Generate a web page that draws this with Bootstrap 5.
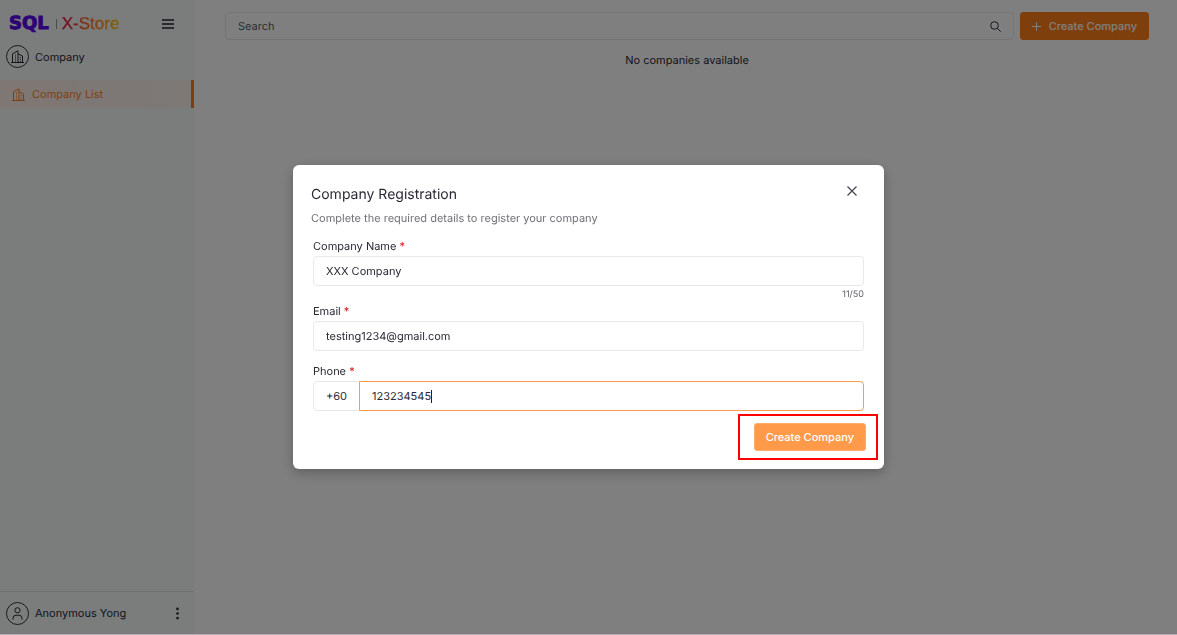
<!DOCTYPE html>
<html lang="en">
<head>
<meta charset="utf-8">
<meta name="viewport" content="width=device-width, initial-scale=1">
<title>SQL X-Store</title>
<link rel="stylesheet" href="https://cdn.jsdelivr.net/npm/bootstrap@5.3.0/dist/css/bootstrap.min.css">
<style>
:root{--ink:#2a2a36;--line:#e9e9eb;--brand:#ff7f1a}
body{font-family:Inter,sans-serif;font-size:11px;line-height:16px;color:var(--ink);background:#fff;text-rendering:geometricPrecision}
input,button{text-rendering:inherit}
svg{display:block;fill:none;stroke:currentColor}
.app{border-bottom:1px solid #b3adb1}
.side{width:194px;background:#f5fbf9}
.side-head{height:45px;padding:3px 20px 0 9px}
.logo-sql{font:bold 18px/20px "DejaVu Sans",sans-serif;color:#5b08ec;-webkit-text-stroke:1px #5b08ec}
.logo-store{font:17px/20px "Liberation Sans",sans-serif;background:linear-gradient(90deg,#e6104c,#ff7030 45%,#ffc414);background-clip:text;-webkit-background-clip:text;color:transparent;-webkit-text-stroke:.4px transparent}
.logo-bar{width:1px;height:10px;background:#999;margin:0 5px 0 7px}
.ring{width:23px;height:23px;border:1px solid #333;border-radius:50%}
.row-company{padding:0 6px;gap:6px}
.item-active{height:28px;margin-top:12px;padding-left:12px;gap:7px;color:var(--brand);background:linear-gradient(90deg,#fdeee7,#f9f2ee);border-right:3px solid var(--brand)}
.side-foot{height:43px;padding:0 10px 0 6px;gap:6px;border-top:1px solid #dfe5e3}
.main-pane{padding:12px 28px 0 31px}
.form-control,.input-group-text{font-size:11px;line-height:16px;height:30px;padding:0 12px;border-color:var(--line);border-radius:4px;color:var(--ink);background:#fff}
.search-row{gap:6px}
.search-box .form-control{height:28px;padding-right:32px}
.search-box .form-control::placeholder{color:#5c5c66;opacity:1}
.search-icon{right:13px;top:9px}
.btn-brand{--bs-btn-bg:#ff7f1a;--bs-btn-color:#fff;--bs-btn-border-color:#ff7f1a;--bs-btn-hover-bg:#f07010;--bs-btn-hover-color:#fff;height:28px;padding:0 11px;font-size:11px;line-height:16px;font-weight:500;border-radius:3px}
.btn-soft{--bs-btn-bg:#ff9a4a;--bs-btn-border-color:#ffab69}
.modal-backdrop{height:calc(100vh - 1px)}
.modal{padding-bottom:2px}
.modal-dialog{max-width:591px}
.modal-content{border:0;border-radius:6px;padding:20px 18px 18px;color:var(--ink);box-shadow:0 4px 12px rgba(0,0,0,.25)}
.modal-title{font-size:14px;line-height:20px;font-weight:400}
.sub-text{color:#70707a;margin:5px 0 12px}
.fields{padding:0 2px}
.form-label{margin-bottom:2px;display:block}
.req{color:#d01818}
.count{font-size:9px;line-height:17px;color:#60606a}
.phone-code{width:47px}
.phone-input,.phone-input:focus{border-color:#ff9a4a;box-shadow:none;caret-color:transparent}
.input-group .phone-input{border-top-right-radius:4px!important;border-bottom-right-radius:4px!important}
.text-caret{left:119px;top:9px;width:1px;height:13px;background:#222;z-index:6}
.close-btn{right:27px;top:21px;line-height:0;color:#44444e}
.menu-dots{fill:currentColor;stroke:none}
.callout{inset:-9px -12px -9px -16px;border:2px solid #f00;pointer-events:none}
</style>
</head>
<body>
<div class="app d-flex min-vh-100">
  <aside class="side d-flex flex-column flex-shrink-0">
    <div class="side-head d-flex align-items-center">
      <span class="logo-sql">SQL</span><span class="logo-bar"></span><span class="logo-store">X-Store</span>
      <button class="btn p-0 border-0 ms-auto" aria-label="Toggle menu"><svg width="12" height="10" viewBox="0 0 12 10" stroke-width="1.4"><path d="M0 1h12M0 5h12M0 9h12"/></svg></button>
    </div>
    <div class="row-company d-flex align-items-center">
      <span class="ring d-flex align-items-center justify-content-center"><svg width="13" height="13" viewBox="0 0 13 13"><path d="M0 12.500h13M1.500 12.500V3.800L7 .8v11.700M7 3.800l4.500 2.200v6.500"/><path d="M4.500 4.500v7.500M9.300 7v5" stroke-dasharray="1 1"/></svg></span>
      <span>Company</span>
    </div>
    <a href="#" class="item-active d-flex align-items-center text-decoration-none">
      <svg width="13" height="13" viewBox="0 0 13 13"><path d="M0 12.500h13M1.500 12.500V3.800L7 .8v11.700M7 3.800l4.500 2.200v6.500"/><path d="M4.500 4.500v7.500M9.300 7v5" stroke-dasharray="1 1"/></svg>
      <span>Company List</span>
    </a>
    <div class="side-foot d-flex align-items-center mt-auto">
      <span class="ring d-flex align-items-center justify-content-center"><svg width="11" height="13" viewBox="0 0 11 13"><circle cx="5.5" cy="3.3" r="2.6"/><path d="M1 12.7v-1.500a3 3 0 0 1 3-3h3a3 3 0 0 1 3 3v1.500"/></svg></span>
      <span>Anonymous Yong</span>
      <button class="btn p-0 border-0 ms-auto" aria-label="Account menu"><svg class="menu-dots" width="13" height="13" viewBox="0 0 13 13"><circle cx="6.500" cy="1.900" r="1.300"/><circle cx="6.500" cy="6.500" r="1.300"/><circle cx="6.500" cy="11.100" r="1.300"/></svg></button>
    </div>
  </aside>
  <main class="main-pane flex-grow-1">
    <div class="search-row d-flex">
      <div class="search-box position-relative flex-grow-1">
        <input class="form-control" type="search" placeholder="Search" aria-label="Search">
        <svg class="search-icon position-absolute" width="11" height="11" viewBox="0 0 11 11"><circle cx="4.500" cy="4.500" r="3.800"/><path d="M7.300 7.300l3.400 3.400"/></svg>
      </div>
      <button class="btn btn-brand d-flex align-items-center gap-2"><svg width="9" height="9" viewBox="0 0 9 9"><path d="M4.500 0v9M0 4.500h9"/></svg>Create Company</button>
    </div>
    <p class="text-center mt-2 pt-1 mb-0">No companies available</p>
  </main>
</div>
<div class="modal-backdrop show"></div>
<div class="modal show d-block" tabindex="-1" role="dialog" aria-labelledby="regTitle">
  <div class="modal-dialog modal-dialog-centered">
    <form class="modal-content">
      <h1 class="modal-title" id="regTitle">Company Registration</h1>
      <button type="button" class="close-btn btn p-0 border-0 position-absolute" aria-label="Close"><svg width="10" height="10" viewBox="0 0 10 10" stroke-width="1.200"><path d="M.5 .5l9 9M9.500 .5l-9 9"/></svg></button>
      <p class="sub-text">Complete the required details to register your company</p>
      <div class="fields">
        <label class="form-label" for="cname">Company Name <span class="req">*</span></label>
        <input class="form-control" id="cname" type="text" maxlength="50" value="XXX Company">
        <div class="count text-end">11/50</div>
        <label class="form-label" for="email">Email <span class="req">*</span></label>
        <input class="form-control" id="email" type="email" value="testing1234@gmail.com">
        <label class="form-label mt-2 pt-1" for="phone">Phone <span class="req">*</span></label>
        <div class="input-group">
          <span class="input-group-text phone-code">+60</span>
          <input class="form-control phone-input" id="phone" type="tel" value="123234545">
          <span class="text-caret position-absolute"></span>
        </div>
      </div>
      <div class="d-flex justify-content-end mt-2 pt-1">
        <div class="position-relative">
          <button type="submit" class="btn btn-brand btn-soft">Create Company</button>
          <span class="callout position-absolute"></span>
        </div>
      </div>
    </form>
  </div>
</div>
<script src="https://cdn.jsdelivr.net/npm/bootstrap@5.3.0/dist/js/bootstrap.bundle.min.js"></script>
</body>
</html>
